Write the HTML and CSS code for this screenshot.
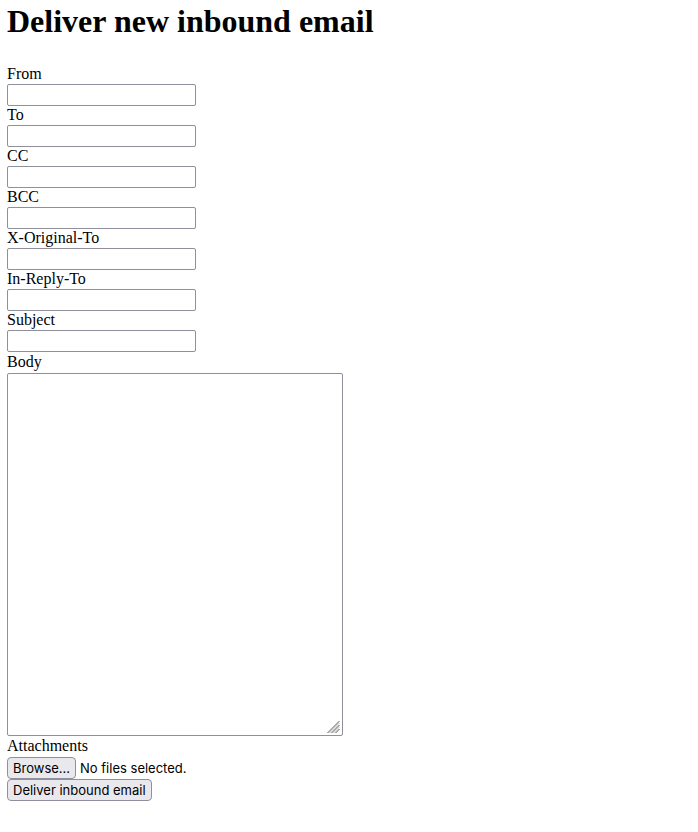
FILE: index.html
```html
<!DOCTYPE html>
<html lang="en">
<head>
<meta charset="utf-8">
<meta name="viewport" content="width=device-width, initial-scale=1">
<title>Deliver new inbound email</title>
<link rel="stylesheet" href="styles.css">
</head>
<body>
<h1>Deliver new inbound email</h1>
<form>
  <div class="field"><label for="from">From</label><input class="text" type="text" id="from" name="from"></div>
  <div class="field"><label for="to">To</label><input class="text" type="text" id="to" name="to"></div>
  <div class="field"><label for="cc">CC</label><input class="text" type="text" id="cc" name="cc"></div>
  <div class="field"><label for="bcc">BCC</label><input class="text" type="text" id="bcc" name="bcc"></div>
  <div class="field"><label for="x_original_to">X-Original-To</label><input class="text" type="text" id="x_original_to" name="x_original_to"></div>
  <div class="field"><label for="in_reply_to">In-Reply-To</label><input class="text" type="text" id="in_reply_to" name="in_reply_to"></div>
  <div class="field"><label for="subject">Subject</label><input class="text" type="text" id="subject" name="subject"></div>
  <div class="field field-body">
    <label for="body">Body</label>
    <div class="editor">
      <textarea id="body" name="body" rows="24" cols="40"></textarea>
      <svg class="grip" viewBox="0 0 13 12" aria-hidden="true"><path d="M0.5 12 12.5 0M4.5 12 12.5 4M8.5 12 12.5 8" fill="none" stroke="#555" stroke-width="1"/><path d="M2.5 12 12.5 2M6.5 12 12.5 6" fill="none" stroke="#bbb" stroke-width="1"/></svg>
    </div>
  </div>
  <div class="field field-file">
    <label for="attachments">Attachments</label>
    <div class="file">
      <span class="button">Browse…</span>
      <span>No files selected.</span>
      <input type="file" id="attachments" name="attachments" multiple>
    </div>
  </div>
  <button class="button" type="submit">Deliver inbound email</button>
</form>
</body>
</html>
```
FILE: styles.css
```css
* {
  box-sizing: border-box;
}

body {
  margin: 0 7px;
  background: #fff;
  color: #000;
  font: 16px/17px "Liberation Serif", "Times New Roman", serif;
}

h1 {
  margin: 3px 0 25px;
  font-size: 32px;
  line-height: 37px;
}

form,
.field {
  display: flex;
  flex-direction: column;
  align-items: flex-start;
}

.field {
  gap: 2px;
}

.text,
textarea {
  border: 1px solid #8f8f9d;
  border-radius: 2px;
  background: #fff;
  padding: 1px 2px;
  font: 13px/16px Inter, sans-serif;
}

.text {
  width: 189px;
  height: 22px;
}

.field-body {
  padding: 1px 0;
}

.field-body,
.field-file {
  gap: 3px;
}

.editor {
  position: relative;
  display: flex;
}

textarea {
  width: 336px;
  height: 363px;
  resize: both;
}

textarea::-webkit-resizer {
  background: transparent;
}

.grip {
  position: absolute;
  right: 3px;
  bottom: 3px;
  width: 13px;
  height: 12px;
  pointer-events: none;
}

.file {
  position: relative;
  display: flex;
  align-items: center;
  gap: 4px;
  font: 13px/20px Inter, sans-serif;
}

.file input {
  position: absolute;
  inset: 0;
  width: 100%;
  opacity: 0;
}

.button {
  border: 1px solid #8f8f9d;
  border-radius: 4px;
  background: #e9e9ed;
  color: #000;
  padding: 0 5px;
  font: 13px/20px Inter, sans-serif;
}
```
